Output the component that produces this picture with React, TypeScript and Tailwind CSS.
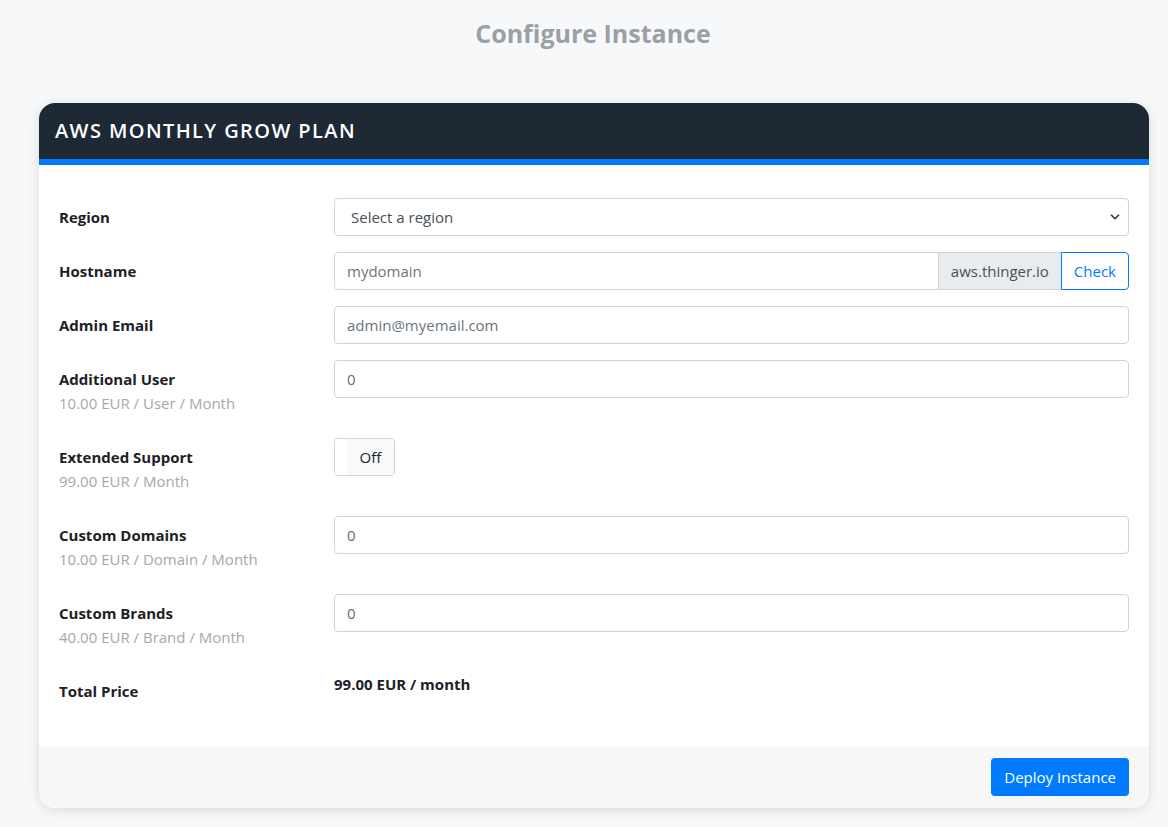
import { ChevronDown } from "lucide-react";

const font = { fontFamily: '"Open Sans", "Noto Sans", sans-serif' };

function Label({ title, sub }: { title: string; sub?: string }) {
  return (
    <div className="w-[275px] shrink-0 px-[15px] py-[7px]">
      <div className="text-[15px] leading-6 font-bold text-[#1d2125]">{title}</div>
      {sub && <div className="text-[15px] leading-6 text-[#a3a8ad]">{sub}</div>}
    </div>
  );
}

function NumberInput() {
  return (
    <input
      type="text"
      defaultValue="0"
      className="w-full h-[38px] px-3 border border-[#ced4da] rounded-[4px] text-[15px] text-[#5b7083] outline-none"
    />
  );
}

function Row({ title, sub, children }: { title: string; sub?: string; children: React.ReactNode }) {
  return (
    <div className="flex -mx-[15px] mb-4">
      <Label title={title} sub={sub} />
      <div className="flex-1 px-[15px]">{children}</div>
    </div>
  );
}

export default function App() {
  return (
    <div className="min-h-screen bg-[#f7f8fa] pb-5" style={font}>
      <h1 className="text-center text-[25px] font-bold text-[#9aa0a6] pt-[13px] pl-[18px] leading-10">Configure Instance</h1>

      <div className="ml-[39px] w-[1110px] mt-[50px] bg-white rounded-2xl shadow-[0_2px_12px_rgba(0,0,0,0.12)] overflow-hidden">
        <div className="bg-[#1e2935] h-[56px] flex items-center px-4">
          <h2 className="text-white text-[20px] font-semibold tracking-[0.07em] uppercase">AWS Monthly Grow Plan</h2>
        </div>
        <div className="h-[6px] bg-[#007bff]" />

        <div className="px-5 pt-[33px] pb-5">
          <Row title="Region">
            <div className="relative">
              <select className="w-full h-[38px] pl-4 pr-8 border border-[#ced4da] rounded-[4px] text-[15px] text-[#495057] bg-white appearance-none outline-none">
                <option>Select a region</option>
              </select>
              <ChevronDown className="absolute right-[7px] top-[12px] w-[14px] h-[14px] text-[#343a40]" strokeWidth={3} />
            </div>
          </Row>

          <Row title="Hostname">
            <div className="flex h-[38px]">
              <input
                type="text"
                placeholder="mydomain"
                className="flex-1 min-w-0 px-3 border border-[#ced4da] rounded-l-[4px] text-[15px] placeholder:text-[#6c757d] outline-none"
              />
              <span className="flex items-center px-3 bg-[#e9ecef] border-y border-[#ced4da] text-[15px] text-[#495057]">
                aws.thinger.io
              </span>
              <button className="px-3 border border-[#007bff] rounded-r-[4px] text-[15px] text-[#007bff] bg-white">
                Check
              </button>
            </div>
          </Row>

          <Row title="Admin Email">
            <input
              type="text"
              placeholder="admin@myemail.com"
              className="w-full h-[38px] px-3 border border-[#ced4da] rounded-[4px] text-[15px] placeholder:text-[#6c757d] outline-none"
            />
          </Row>

          <Row title="Additional User" sub="10.00 EUR / User / Month">
            <NumberInput />
          </Row>

          <Row title="Extended Support" sub="99.00 EUR / Month">
            <div className="flex w-[61px] h-[38px] border border-[#ced4da] rounded-[4px] overflow-hidden">
              <div className="w-[12px] bg-white" />
              <div className="flex-1 bg-[#f8f9fa] flex items-center justify-center text-[15px] text-[#212529]">Off</div>
            </div>
          </Row>

          <Row title="Custom Domains" sub="10.00 EUR / Domain / Month">
            <NumberInput />
          </Row>

          <Row title="Custom Brands" sub="40.00 EUR / Brand / Month">
            <NumberInput />
          </Row>

          <div className="flex -mx-[15px] mb-4">
            <Label title="Total Price" />
            <div className="flex-1 px-[15px] text-[15px] leading-6 font-bold text-[#1d2125]">99.00 EUR / month</div>
          </div>
        </div>

        <div className="bg-[#f7f7f7] px-5 py-3 flex justify-end">
          <button className="h-[38px] px-[13px] bg-[#007bff] text-white text-[15px] rounded-[4px]">Deploy Instance</button>
        </div>
      </div>
    </div>
  );
}
